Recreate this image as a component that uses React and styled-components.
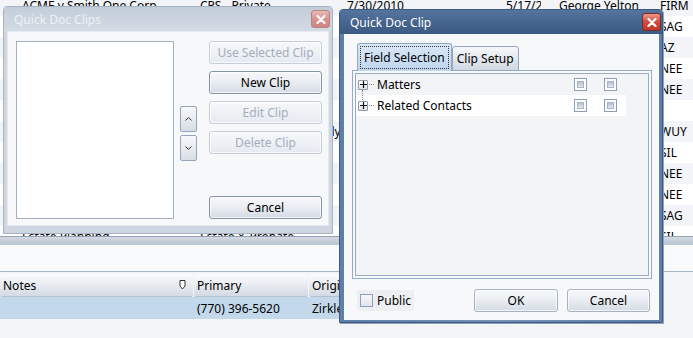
import React from "react";
import styled, { createGlobalStyle, css } from "styled-components";

const GlobalStyle = createGlobalStyle`
  html, body {
    margin: 0;
    padding: 0;
  }
  body {
    font-family: "Noto Sans", "Open Sans", sans-serif;
    font-size: 12px;
    color: #000;
    background: #f4f5f7;
  }
`;

const records = [
  ["ACME v Smith One Corp", "CPS - Private", "7/30/2010", "5/17/2011", "George Yelton", "FIRM"],
  ["", "", "", "", "", "SAG"],
  ["", "", "", "", "", "AZ"],
  ["", "", "", "", "", "NEE"],
  ["", "", "", "", "", "NEE"],
  ["", "", "", "", "", ""],
  ["", "Estate & Probate - Family", "", "", "", "WUY"],
  ["", "", "", "", "", "SIL"],
  ["", "", "", "", "", "NEE"],
  ["", "", "", "", "", "NEE"],
  ["", "", "", "", "", "SAG"],
  ["Estate Planning", "Estate & Probate", "", "", "", "SIL"],
];

const clips = [
  { label: "Use Selected Clip", disabled: true },
  { label: "New Clip", main: true },
  { label: "Edit Clip", disabled: true },
  { label: "Delete Clip", disabled: true },
];

const fields = ["Matters", "Related Contacts"];

const CloseIcon = () => (
  <svg width="10" height="9" viewBox="0 0 10 9">
    <path d="M1.5 1 L8.5 8 M8.5 1 L1.5 8" stroke="#fff" strokeWidth="2.2" strokeLinecap="round" />
  </svg>
);

const Caret = ({ down }) => (
  <svg width="7" height="4" viewBox="0 0 7 4">
    <path
      d={down ? "M0.5 0.5 L3.5 3.5 L6.5 0.5" : "M0.5 3.5 L3.5 0.5 L6.5 3.5"}
      stroke="#333"
      fill="none"
    />
  </svg>
);

const PlusIcon = () => (
  <svg width="7" height="7" viewBox="0 0 7 7">
    <path d="M0 3.5 H7 M3.5 0 V7" stroke="#111" strokeWidth="1.2" />
  </svg>
);

const PinIcon = () => (
  <svg width="7" height="10" viewBox="0 0 7 10">
    <path d="M1 0.5 H6 V6 L3.5 9 L1 6 Z" stroke="#333" fill="#fff" />
  </svg>
);

const App = () => {
  return (
    <>
      <GlobalStyle />
      <Screen>
        <Records>
          <RecordList>
            {records.map((r, i) => (
              <Record key={i} $alt={i % 2 === 0}>
                <Cell>{r[0]}</Cell>
                <Cell>{r[1]}</Cell>
                <Cell>{r[2]}</Cell>
                <Cell $clip={35}>{r[3]}</Cell>
                <Cell>{r[4]}</Cell>
                <Cell>{r[5]}</Cell>
              </Record>
            ))}
          </RecordList>
        </Records>
        <Splitter />
        <Toolbar />
        <ContactGrid>
          <HeadCell>
            Notes
            <PinIcon />
          </HeadCell>
          <HeadCell>Primary</HeadCell>
          <HeadCell>Original Contact</HeadCell>
          <DataCell $selected />
          <DataCell $selected>(770) 396-5620</DataCell>
          <DataCell $selected>Zirkle Attorneys</DataCell>
        </ContactGrid>

        <Window $x={3} $y={6} $w={330} $h={228}>
          <TitleBar>
            <span>Quick Doc Clips</span>
            <CloseButton>
              <CloseIcon />
            </CloseButton>
          </TitleBar>
          <Client>
            <ClipsBody>
              <ListBox />
              <Movers>
                <MoveButton>
                  <Caret />
                </MoveButton>
                <MoveButton>
                  <Caret down />
                </MoveButton>
              </Movers>
              <ButtonColumn>
                {clips.map((c) => (
                  <Button key={c.label} disabled={c.disabled} $main={c.main}>
                    {c.label}
                  </Button>
                ))}
                <Button $main $push>
                  Cancel
                </Button>
              </ButtonColumn>
            </ClipsBody>
          </Client>
        </Window>

        <Window $active $x={339} $y={9} $w={324} $h={314}>
          <TitleBar $active>
            <span>Quick Doc Clip</span>
            <CloseButton $active>
              <CloseIcon />
            </CloseButton>
          </TitleBar>
          <Client $active>
            <ClipBody>
              <TabStrip>
                <Tab $selected>
                  <FocusRing>Field Selection</FocusRing>
                </Tab>
                <Tab>Clip Setup</Tab>
              </TabStrip>
              <TabPanel>
                <TabInner>
                  {fields.map((f, i) => (
                    <TreeRow key={f} $alt={i % 2 === 1}>
                      <Expander $linked={i > 0}>
                        <PlusIcon />
                      </Expander>
                      <Branch />
                      <span>{f}</span>
                      <Checks>
                        <Check />
                        <Check />
                      </Checks>
                    </TreeRow>
                  ))}
                </TabInner>
              </TabPanel>
              <Footer>
                <PublicLabel>
                  <PublicBox />
                  Public
                </PublicLabel>
                <FooterButtons>
                  <Button $width={84}>OK</Button>
                  <Button $width={83}>Cancel</Button>
                </FooterButtons>
              </Footer>
            </ClipBody>
          </Client>
        </Window>
      </Screen>
    </>
  );
};

export default App;

const Screen = styled.div`
  position: relative;
  width: 693px;
  height: 338px;
  overflow: hidden;
  background: #f4f5f7;
`;

const Records = styled.div`
  height: 236px;
  overflow: hidden;
  background: #fff;
`;

const RecordList = styled.div`
  margin-top: -5px;
`;

const Record = styled.div`
  display: grid;
  grid-template-columns: 178px 147px 159px 53px 101px 1fr;
  align-items: center;
  height: 21px;
  padding-left: 22px;
  white-space: nowrap;
  background: ${({ $alt }) => ($alt ? "#f2f4f7" : "#fff")};
`;

const Cell = styled.span`
  overflow: hidden;
  ${({ $clip }) =>
    $clip &&
    css`
      max-width: ${$clip}px;
    `}
`;

const Splitter = styled.div`
  height: 8px;
  border-top: 1px solid #93a3b7;
  background: linear-gradient(#d2d9e2, #b9c4d1);
`;

const Toolbar = styled.div`
  height: 26px;
  background: #f8f9fb;
  border-bottom: 1px solid #a6b3c3;
`;

const ContactGrid = styled.div`
  display: grid;
  grid-template-columns: 194px 115px 150px;
  grid-template-rows: 23px 22px;
  margin-top: 2px;
  width: 459px;
`;

const HeadCell = styled.div`
  display: flex;
  align-items: center;
  justify-content: space-between;
  margin-right: 1px;
  padding: 0 7px 0 3px;
  border-radius: 2px;
  background: linear-gradient(#fbfcfd, #e6eaf0 55%, #d3dae3);
  border-bottom: 1px solid #b6c1ce;
  white-space: nowrap;
  overflow: hidden;
`;

const DataCell = styled.div`
  display: flex;
  align-items: center;
  padding-left: 3px;
  white-space: nowrap;
  overflow: hidden;
  background: ${({ $selected }) => ($selected ? "#c3d8eb" : "transparent")};
`;

const Window = styled.section`
  position: absolute;
  left: ${({ $x }) => $x}px;
  top: ${({ $y }) => $y}px;
  width: ${({ $w }) => $w}px;
  height: ${({ $h }) => $h}px;
  box-sizing: border-box;
  display: flex;
  flex-direction: column;
  padding: ${({ $active }) => ($active ? "0 3px 2px 4px" : "0 3px 7px 3px")};
  border: 1px solid ${({ $active }) => ($active ? "#3f5a80" : "#a5b3c4")};
  border-radius: 4px 4px 0 0;
  background: ${({ $active }) =>
    $active ? "linear-gradient(90deg, #5f7ea8, #7591b6 50%, #5f7ea8)" : "#cdd6e1"};
  box-shadow: ${({ $active }) => ($active ? "1px 1px 0 #8ea2bd" : "none")};
`;

const TitleBar = styled.header`
  display: flex;
  align-items: center;
  justify-content: space-between;
  height: 24px;
  margin: ${({ $active }) => ($active ? "0 -3px 0 -4px" : "0 -3px")};
  padding: ${({ $active }) => ($active ? "0 1px 0 10px" : "0 2px 0 10px")};
  color: ${({ $active }) => ($active ? "#fff" : "#eef1f5")};
  background: ${({ $active }) =>
    $active ? "linear-gradient(#55749e, #43628c 60%, #3b5a84)" : "linear-gradient(#c3cdd9, #d3dbe4)"};
`;

const CloseButton = styled.span`
  display: flex;
  align-items: center;
  justify-content: center;
  width: 17px;
  height: 16px;
  border-radius: 3px;
  border: 1px solid ${({ $active }) => ($active ? "#7d2b24" : "#b77a7a")};
  background: ${({ $active }) =>
    $active ? "linear-gradient(#ec9a8a, #d2493c 50%, #c0362a)" : "linear-gradient(#ebb9b5, #d98d88 50%, #cf7b75)"};
  opacity: ${({ $active }) => ($active ? 1 : 0.9)};
`;

const Client = styled.div`
  flex: 1;
  display: flex;
  background: #f7f8fa;
  border: ${({ $active }) => ($active ? "none" : "1px solid #e7ebf0")};
`;

const ClipsBody = styled.div`
  display: flex;
  align-items: flex-start;
  padding: 9px 0 0 8px;
`;

const ListBox = styled.div`
  width: 158px;
  height: 178px;
  box-sizing: border-box;
  background: #fff;
  border: 1px solid #9fb0c5;
`;

const Movers = styled.div`
  display: flex;
  flex-direction: column;
  gap: 3px;
  margin: 65px 0 0 6px;
`;

const MoveButton = styled.span`
  display: flex;
  align-items: center;
  justify-content: center;
  width: 17px;
  height: 26px;
  box-sizing: border-box;
  border: 1px solid #95a6bc;
  border-radius: 2px;
  background: linear-gradient(#f7f9fb, #d8dee6);
`;

const ButtonColumn = styled.div`
  display: flex;
  flex-direction: column;
  gap: 7px;
  height: 178px;
  margin-left: 12px;
`;

const Button = styled.button`
  width: ${({ $width }) => $width || 113}px;
  height: 23px;
  padding: 0;
  font: inherit;
  color: #000;
  border: 1px solid ${({ $main }) => ($main ? "#8493a8" : "#a5b2c3")};
  border-radius: 3px;
  background: linear-gradient(#f6f8fa, #e9edf2 50%, #d4dbe4);
  box-shadow: inset 0 0 0 1px rgba(255, 255, 255, 0.7);
  ${({ $push }) =>
    $push &&
    css`
      margin-top: auto;
    `}

  &:disabled {
    color: #a2aebe;
    border-color: #c4cdd9;
    background: linear-gradient(#f6f8fa, #e6eaf0);
  }
`;

const ClipBody = styled.div`
  display: flex;
  flex-direction: column;
  padding: 9px 7px 0 8px;
  width: 100%;
`;

const TabStrip = styled.div`
  display: flex;
  align-items: flex-end;
  height: 28px;
  margin: 0 0 -1px 5px;
  position: relative;
  z-index: 1;
`;

const Tab = styled.div`
  display: flex;
  align-items: center;
  box-sizing: border-box;
  height: ${({ $selected }) => ($selected ? "28px" : "25px")};
  padding: ${({ $selected }) => ($selected ? "0 2px" : "0 4px")};
  border: 1px solid #93a8c2;
  border-bottom: ${({ $selected }) => ($selected ? "none" : "1px solid #93a8c2")};
  border-radius: 3px 3px 0 0;
  white-space: nowrap;
  background: ${({ $selected }) =>
    $selected ? "linear-gradient(#dbe8f6, #bed5ee)" : "linear-gradient(#f7f8fa, #dfe4eb 60%, #d0d8e2)"};
`;

const FocusRing = styled.span`
  padding: 2px 3px;
  border: 1px dotted #333;
`;

const TabPanel = styled.div`
  width: 300px;
  height: 209px;
  box-sizing: border-box;
  padding: 2px;
  border: 1px solid #97abc4;
  background: #f8f9fb;
`;

const TabInner = styled.div`
  height: 100%;
  box-sizing: border-box;
  border: 1px solid #97abc4;
  background: #f3f4f6;
`;

const TreeRow = styled.div`
  display: flex;
  align-items: center;
  width: 270px;
  height: 21px;
  background: ${({ $alt }) => ($alt ? "#fff" : "transparent")};
`;

const Expander = styled.span`
  position: relative;
  display: flex;
  align-items: center;
  justify-content: center;
  width: 10px;
  height: 10px;
  box-sizing: border-box;
  margin-left: 2px;
  border: 1px solid #8d9aab;
  border-radius: 1px;
  background: linear-gradient(#fff, #dde2e8);

  ${({ $linked }) =>
    $linked &&
    css`
      &::before {
        content: "";
        position: absolute;
        left: 3px;
        top: -12px;
        height: 10px;
        border-left: 1px dotted #888;
      }
    `}
`;

const Branch = styled.span`
  width: 5px;
  margin: 0 3px 0 1px;
  border-top: 1px dotted #888;
`;

const Checks = styled.div`
  display: flex;
  gap: 17px;
  margin-left: auto;
  padding-right: 9px;
`;

const Check = styled.span`
  position: relative;
  width: 13px;
  height: 13px;
  box-sizing: border-box;
  border: 1px solid #8aa0bd;
  background: #fff;

  &::after {
    content: "";
    position: absolute;
    inset: 2px;
    border: 1px solid #a9b6c8;
    background: linear-gradient(#b4c0d1, #e4e9ef);
  }
`;

const Footer = styled.div`
  display: flex;
  align-items: center;
  justify-content: space-between;
  margin-top: 10px;
  padding-left: 5px;
`;

const PublicLabel = styled.label`
  display: flex;
  align-items: center;
  gap: 4px;
  height: 21px;
  padding: 0 3px;
  background: #edeff2;
`;

const PublicBox = styled.span`
  width: 13px;
  height: 13px;
  box-sizing: border-box;
  border: 1px solid #8aa0bd;
  background: linear-gradient(#f4f6f8, #e2e6ec);
`;

const FooterButtons = styled.div`
  display: flex;
  gap: 9px;
  margin-right: 2px;
`;
